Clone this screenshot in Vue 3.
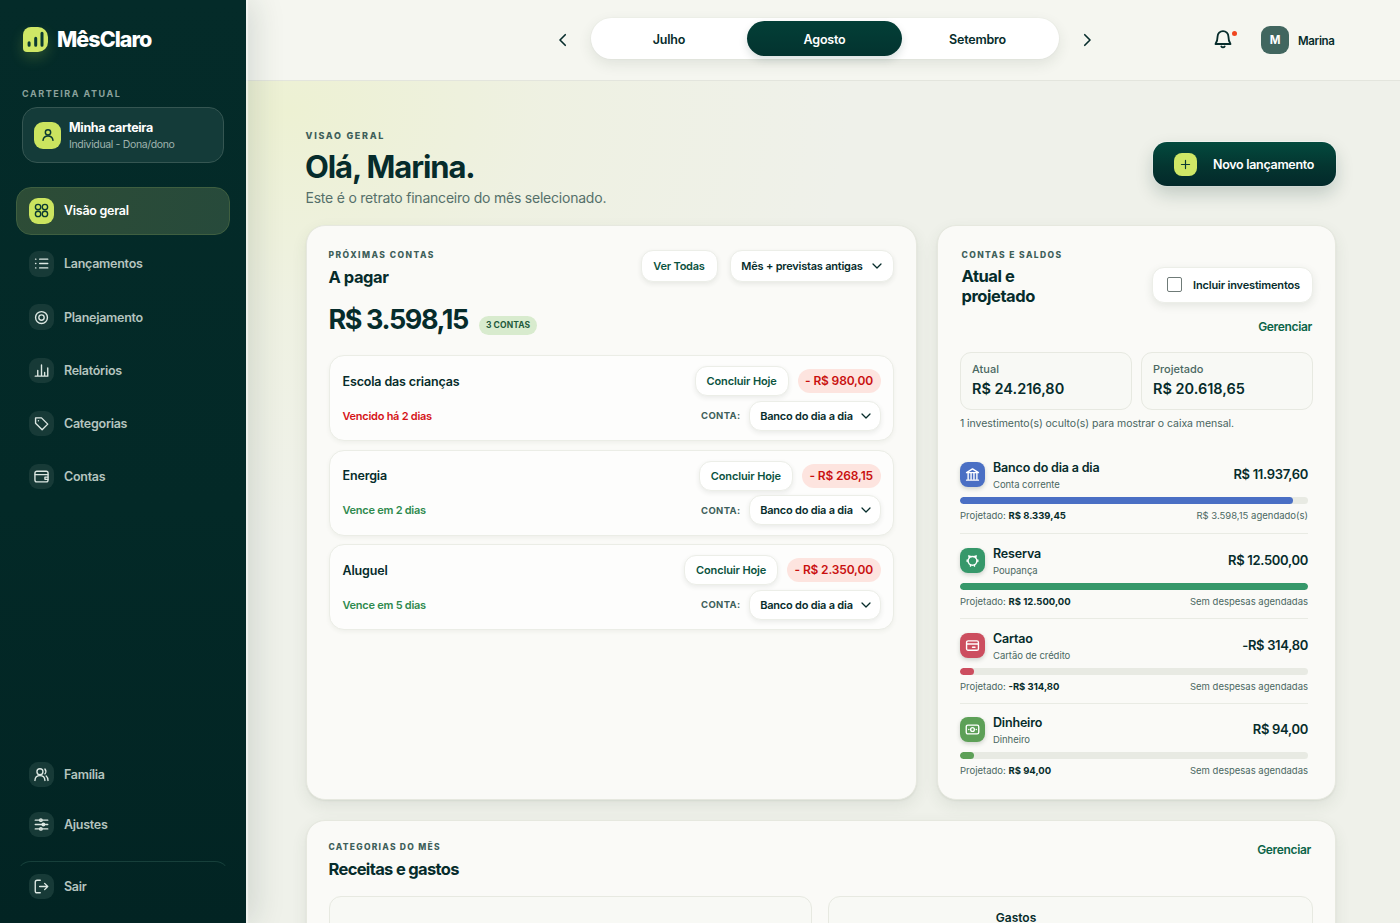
<template>
    <div class="layout">
        <aside class="sidebar">
            <div class="brand">
                <span class="brand-mark">
                    <svg viewBox="0 0 25 25" width="25" height="25" stroke="#0b3a32" stroke-width="3" stroke-linecap="round">
                        <path d="M6.1 15.800v2.400M12.700 11.300v6.900M19 6.300v11.900" />
                    </svg>
                </span>
                <span class="brand-name">MêsClaro</span>
            </div>

            <div class="side-label">CARTEIRA ATUAL</div>
            <div class="wallet">
                <span class="wallet-icon"><svg class="icon" viewBox="0 0 24 24" width="16" height="16" v-html="icons.user"></svg></span>
                <div class="wallet-text">
                    <div class="wallet-name">Minha carteira</div>
                    <div class="wallet-role">Individual - Dona/dono</div>
                </div>
            </div>

            <nav class="nav">
                <a v-for="item in mainNav" :key="item.label" class="nav-item" :class="{ active: item.active }">
                    <span class="nav-icon"><svg class="icon" viewBox="0 0 24 24" width="15" height="15" v-html="icons[item.icon]"></svg></span>
                    {{ item.label }}
                </a>
            </nav>

            <nav class="nav nav-bottom">
                <a v-for="item in bottomNav" :key="item.label" class="nav-item" :class="{ exit: item.exit }">
                    <span class="nav-icon"><svg class="icon" viewBox="0 0 24 24" width="15" height="15" v-html="icons[item.icon]"></svg></span>
                    {{ item.label }}
                </a>
            </nav>
        </aside>

        <main class="main">
            <header class="topbar">
                <div class="months">
                    <button class="arrow" @click="prevMonth">
                        <svg class="icon" viewBox="0 0 24 24" width="18" height="18"><path d="M15 5l-7 7 7 7" /></svg>
                    </button>
                    <div class="month-switch">
                        <span v-for="(month, i) in months" :key="month" class="month" :class="{ selected: i === selectedMonth }" @click="selectedMonth = i">{{ month }}</span>
                    </div>
                    <button class="arrow" @click="nextMonth">
                        <svg class="icon" viewBox="0 0 24 24" width="18" height="18"><path d="M9 5l7 7-7 7" /></svg>
                    </button>
                </div>
                <div class="profile">
                    <span class="bell">
                        <svg class="icon" viewBox="0 0 24 24" width="20" height="20"><path d="M5.500 9a6.500 6.500 0 0 1 13 0c0 5 1 6.800 2.500 9H3c1.500-2.200 2.500-4 2.500-9z" /><path d="M10 21a2.400 2.400 0 0 0 4 0" /></svg>
                    </span>
                    <span class="avatar">M</span>
                    <span class="profile-name">Marina</span>
                </div>
            </header>

            <section class="content">
                <div class="page-head">
                    <div>
                        <div class="eyebrow eyebrow-page">VISAO GERAL</div>
                        <h1>Olá, Marina.</h1>
                        <p>Este é o retrato financeiro do mês selecionado.</p>
                    </div>
                    <button class="new-entry">
                        <span class="plus"><svg class="icon" viewBox="0 0 24 24" width="13" height="13"><path d="M12 4.500v15M4.500 12h15" /></svg></span>
                        <span>Novo lançamento</span>
                    </button>
                </div>

                <div class="panels">
                    <div class="card bills">
                        <div class="bills-head">
                            <div>
                                <div class="eyebrow">PRÓXIMAS CONTAS</div>
                                <h2>A pagar</h2>
                            </div>
                            <div class="bills-filters">
                                <button class="btn see-all">Ver Todas</button>
                                <button class="btn period">Mês + previstas antigas <svg class="icon chevron" viewBox="0 0 24 24" width="12" height="12" v-html="icons.chevron"></svg></button>
                            </div>
                        </div>
                        <div class="total">
                            <strong>R$ 3.598,15</strong>
                            <span class="count">3 CONTAS</span>
                        </div>
                        <div class="bill-list">
                            <div v-for="bill in bills" :key="bill.name" class="bill">
                                <div class="bill-row">
                                    <span class="bill-name">{{ bill.name }}</span>
                                    <button class="btn conclude">Concluir Hoje</button>
                                    <span class="bill-value">- R$ {{ bill.value }}</span>
                                </div>
                                <div class="bill-row second">
                                    <span class="bill-due" :class="{ late: bill.late }">{{ bill.due }}</span>
                                    <span class="bill-account">CONTA:</span>
                                    <button class="btn account-select">Banco do dia a dia <svg class="icon chevron" viewBox="0 0 24 24" width="12" height="12" v-html="icons.chevron"></svg></button>
                                </div>
                            </div>
                        </div>
                    </div>

                    <div class="card balances">
                        <div class="balances-head">
                            <div>
                                <div class="eyebrow">CONTAS E SALDOS</div>
                                <h2>Atual e<br>projetado</h2>
                            </div>
                            <div class="balances-actions">
                                <label class="btn include"><span class="checkbox"></span>Incluir investimentos</label>
                                <a class="link">Gerenciar</a>
                            </div>
                        </div>
                        <div class="stats">
                            <div class="stat"><span>Atual</span><strong>R$ 24.216,80</strong></div>
                            <div class="stat"><span>Projetado</span><strong>R$ 20.618,65</strong></div>
                        </div>
                        <div class="note">1 investimento(s) oculto(s) para mostrar o caixa mensal.</div>
                        <div class="accounts">
                            <div v-for="account in accounts" :key="account.name" class="account">
                                <div class="account-top">
                                    <span class="account-icon" :class="account.color"><svg class="icon" viewBox="0 0 24 24" width="15" height="15" v-html="icons[account.icon]"></svg></span>
                                    <div class="account-text">
                                        <div class="account-name">{{ account.name }}</div>
                                        <div class="account-type">{{ account.type }}</div>
                                    </div>
                                    <strong class="account-value">{{ account.value }}</strong>
                                </div>
                                <div class="bar"><div class="fill" :class="account.color" :style="{ width: account.percent + '%' }"></div></div>
                                <div class="account-foot">
                                    <span>Projetado: <b>{{ account.projected }}</b></span>
                                    <span>{{ account.scheduled }}</span>
                                </div>
                            </div>
                        </div>
                    </div>
                </div>

                <div class="card categories">
                    <div class="categories-head">
                        <div>
                            <div class="eyebrow">CATEGORIAS DO MÊS</div>
                            <h2>Receitas e gastos</h2>
                        </div>
                        <a class="link">Gerenciar</a>
                    </div>
                    <div class="charts">
                        <div class="chart"></div>
                        <div class="chart">Gastos</div>
                    </div>
                </div>
            </section>
        </main>
    </div>
</template>

<script setup>
    import { ref } from 'vue';

    const icons = {
        user: '<circle cx="12" cy="8" r="4"/><path d="M4.500 20c.6-4.200 3.400-6.500 7.500-6.500s6.900 2.300 7.500 6.500"/>',
        grid: '<circle cx="6.500" cy="6.500" r="4.300"/><circle cx="17.500" cy="6.500" r="4.300"/><circle cx="6.500" cy="17.500" r="4.300"/><circle cx="17.500" cy="17.500" r="4.300"/>',
        list: '<path d="M9 5h13M9 12h13M9 19h13M2.500 5h.5M2.500 12h.5M2.500 19h.5"/>',
        target: '<circle cx="12" cy="12" r="9.500"/><circle cx="12" cy="12" r="4.300"/>',
        chart: '<path d="M2 21h20V8M6 21v-9M12 21V3M17 21v-6"/>',
        tag: '<path d="M2.500 3h9.500l10 10-9 9L2.500 11.500z"/><path d="M7 7.500h.1"/>',
        wallet: '<rect x="1.500" y="3.500" width="21" height="17" rx="3"/><path d="M2 9h20M22 13h-4.500v3.500H22"/>',
        users: '<circle cx="9.500" cy="7.500" r="4.800"/><path d="M1.500 21.500c.3-5 3.200-7.700 8-7.700s7.700 2.700 8 7.700M17.500 3.200c1.800 2.300 1.800 5.500 0 7.800M19.500 14.500c1.700 1.500 2.700 3.800 2.900 7"/>',
        sliders: '<path d="M2 5h20M2 12h20M2 19h20"/><circle cx="11" cy="5" r="2"/><circle cx="15" cy="12" r="2"/><circle cx="11" cy="19" r="2"/>',
        exit: '<path d="M10 2H5a3 3 0 0 0-3 3v14a3 3 0 0 0 3 3h5M9 12h13M17 7l5 5-5 5"/>',
        chevron: '<path d="M4 8l8 8 8-8"/>',
        bank: '<path d="M2.500 9L12 3l9.500 6zM5 10v9M9.700 10v9M14.300 10v9M19 10v9M2.500 21h19"/>',
        piggy: '<circle cx="12" cy="12.500" r="7"/><path d="M7 7.500L6 4.500l4 1.200M17 7.500l1-3-4 1.200M8.800 19v2M15.200 19v2M20.500 13.500V11M3.500 13.500V11"/>',
        card: '<rect x="2.500" y="4.500" width="19" height="15" rx="2.500"/><path d="M3 9.500h18M12 14.800h4"/>',
        cash: '<rect x="2" y="5" width="20" height="14" rx="2.500"/><circle cx="12" cy="12" r="3"/><path d="M6 12h.1M18 12h.1"/>'
    };

    const mainNav = [
        { label: 'Visão geral', icon: 'grid', active: true },
        { label: 'Lançamentos', icon: 'list' },
        { label: 'Planejamento', icon: 'target' },
        { label: 'Relatórios', icon: 'chart' },
        { label: 'Categorias', icon: 'tag' },
        { label: 'Contas', icon: 'wallet' }
    ];

    const bottomNav = [
        { label: 'Família', icon: 'users' },
        { label: 'Ajustes', icon: 'sliders' },
        { label: 'Sair', icon: 'exit', exit: true }
    ];

    const months = ['Julho', 'Agosto', 'Setembro'];
    const selectedMonth = ref(1);

    const bills = ref([
        { name: 'Escola das crianças', value: '980,00', due: 'Vencido há 2 dias', late: true },
        { name: 'Energia', value: '268,15', due: 'Vence em 2 dias' },
        { name: 'Aluguel', value: '2.350,00', due: 'Vence em 5 dias' }
    ]);

    const accounts = ref([
        { name: 'Banco do dia a dia', type: 'Conta corrente', value: 'R$ 11.937,60', projected: 'R$ 8.339,45', scheduled: 'R$ 3.598,15 agendado(s)', percent: 95.7, icon: 'bank', color: 'blue' },
        { name: 'Reserva', type: 'Poupança', value: 'R$ 12.500,00', projected: 'R$ 12.500,00', scheduled: 'Sem despesas agendadas', percent: 100, icon: 'piggy', color: 'green' },
        { name: 'Cartao', type: 'Cartão de crédito', value: '-R$ 314,80', projected: '-R$ 314,80', scheduled: 'Sem despesas agendadas', percent: 4, icon: 'card', color: 'red' },
        { name: 'Dinheiro', type: 'Dinheiro', value: 'R$ 94,00', projected: 'R$ 94,00', scheduled: 'Sem despesas agendadas', percent: 4, icon: 'cash', color: 'lime' }
    ]);

    function prevMonth() {
        selectedMonth.value = Math.max(0, selectedMonth.value - 1);
    }

    function nextMonth() {
        selectedMonth.value = Math.min(months.length - 1, selectedMonth.value + 1);
    }
</script>

<style>
    html, body {
        margin: 0;
        overflow: hidden;
    }
</style>

<style scoped>
    * {
        box-sizing: border-box;
    }

    .layout {
        display: flex;
        width: 1400px;
        height: 923px;
        overflow: hidden;
        font-family: Inter, "Liberation Sans", sans-serif;
        color: #062c2b;
        background: radial-gradient(ellipse 560px 430px at 290px 110px, #edf1d3 0%, rgba(238, 241, 219, 0.55) 45%, rgba(239, 241, 233, 0) 100%), #eff1ea;
    }

    .icon {
        display: block;
        flex: none;
        fill: none;
        stroke: currentColor;
        stroke-width: 2.2;
        stroke-linecap: round;
        stroke-linejoin: round;
    }

    .chevron {
        stroke-width: 2.5;
    }

    button {
        font-family: inherit;
        border: 0;
        padding: 0;
        background: none;
        color: inherit;
    }

    h1, h2, p {
        margin: 0;
    }

    /* sidebar */
    .sidebar {
        position: relative;
        z-index: 2;
        display: flex;
        flex-direction: column;
        flex: none;
        width: 246px;
        padding: 27px 16px 11px;
        background: linear-gradient(180deg, #042b29 0%, #032927 55%, #022423 100%);
        box-shadow: 2px 0 1px rgba(255, 255, 255, 0.5), 8px 0 30px rgba(20, 50, 40, 0.14);
    }

    .brand {
        display: flex;
        align-items: center;
        gap: 9px;
        height: 25px;
        padding-left: 7px;
    }

    .brand-mark {
        width: 25px;
        height: 25px;
        border-radius: 8px 10px 10px 4px;
        background: #cfe766;
        box-shadow: 0 6px 14px rgba(200, 230, 80, 0.2);
    }

    .brand-name {
        margin-top: -1px;
        font-size: 21.5px;
        font-weight: 800;
        letter-spacing: -0.95px;
        color: #fff;
    }

    .side-label {
        margin: 35px 0 0 6px;
        height: 13px;
        font-size: 9px;
        line-height: 13px;
        font-weight: 700;
        letter-spacing: 1.53px;
        color: #8ba29c;
    }

    .wallet {
        display: flex;
        align-items: center;
        gap: 8px;
        height: 56px;
        margin: 7px 6px 0;
        padding-left: 11px;
        border: 1px solid #355652;
        border-radius: 15px;
        background: #143b39;
    }

    .wallet-icon {
        display: grid;
        place-items: center;
        width: 27px;
        height: 27px;
        border-radius: 9px;
        background: #cbe45f;
        color: #0b3a32;
    }

    .wallet-text {
        padding-top: 2px;
    }

    .wallet-name {
        font-size: 12.5px;
        line-height: 17px;
        font-weight: 700;
        letter-spacing: -0.32px;
        color: #fff;
    }

    .wallet-role {
        font-size: 10.5px;
        line-height: 17px;
        letter-spacing: -0.35px;
        color: #9fb3ae;
    }

    .nav {
        display: flex;
        flex-direction: column;
        gap: 5.7px;
        margin-top: 24px;
    }

    .nav-item {
        display: flex;
        align-items: center;
        gap: 10px;
        height: 47.5px;
        padding-left: 11.5px;
        border: 1px solid transparent;
        border-radius: 15px;
        font-size: 12.5px;
        font-weight: 600;
        letter-spacing: -0.27px;
        color: #b5c4bf;
    }

    .nav-icon {
        display: grid;
        place-items: center;
        width: 25.5px;
        height: 25.5px;
        border-radius: 9px;
        background: #173a37;
        color: #dde8e3;
    }

    .nav-item.active {
        border-color: #3f5f40;
        background: linear-gradient(100deg, #2d4c36, #274a3b);
        color: #fff;
    }

    .nav-item.active .nav-icon {
        background: #cbe45f;
        color: #0b3a32;
    }

    .nav-bottom {
        gap: 2.5px;
        margin-top: auto;
    }

    .nav-item.exit {
        height: 51px;
        margin-top: 10.2px;
        border-top-color: #17403b;
    }

    /* top bar */
    .main {
        flex: 1;
        min-width: 0;
    }

    .topbar {
        display: flex;
        align-items: center;
        justify-content: space-between;
        height: 80.5px;
        padding: 0 65.5px 2px 308px;
        border-bottom: 1px solid #e3e5dd;
        background: #f5f6f0;
    }

    .months {
        display: flex;
        align-items: center;
        gap: 19px;
    }

    .arrow {
        width: 18px;
        height: 18px;
        margin-top: 2px;
    }

    .month-switch {
        display: grid;
        grid-template-columns: 156px 155px 151px;
        align-items: center;
        width: 468px;
        height: 41px;
        border-radius: 21px;
        background: #fff;
        box-shadow: 0 5px 14px rgba(40, 60, 40, 0.1), 0 0 0 1px rgba(40, 60, 40, 0.02);
    }

    .month {
        height: 35px;
        line-height: 37px;
        border-radius: 18px;
        text-align: center;
        font-size: 12.5px;
        font-weight: 600;
        letter-spacing: -0.22px;
    }

    .month.selected {
        background: linear-gradient(180deg, #033f37, #03332f);
        color: #fff;
        box-shadow: 0 4px 8px rgba(10, 50, 40, 0.15);
    }

    .profile {
        display: flex;
        align-items: center;
    }

    .bell {
        position: relative;
        margin-right: 28px;
    }

    .bell::after {
        content: "";
        position: absolute;
        top: 2px;
        left: 19px;
        width: 5px;
        height: 5px;
        border-radius: 50%;
        background: #f0461f;
    }

    .avatar {
        width: 28px;
        height: 28px;
        margin: 3px 9px 0 0;
        border-radius: 9px;
        background: #41665f;
        color: #fff;
        text-align: center;
        font-size: 11.5px;
        line-height: 29px;
        font-weight: 700;
    }

    .profile-name {
        margin-top: 4px;
        font-size: 11.5px;
        font-weight: 600;
        letter-spacing: -0.35px;
    }

    /* page */
    .content {
        padding: 0 64px 0 59.5px;
    }

    .page-head {
        display: flex;
        justify-content: space-between;
        height: 144.5px;
    }

    .eyebrow {
        font-size: 8.5px;
        line-height: 12px;
        font-weight: 800;
        letter-spacing: 1.25px;
        color: #3e5f5a;
    }

    .eyebrow-page {
        margin-top: 49px;
        font-size: 9px;
        letter-spacing: 1.7px;
    }

    h1 {
        margin-top: 5px;
        margin-left: -0.5px;
        font-size: 31px;
        line-height: 40px;
        font-weight: 700;
        letter-spacing: -1.1px;
    }

    .page-head p {
        font-size: 14px;
        line-height: 22px;
        letter-spacing: -0.22px;
        color: #55706a;
    }

    .new-entry {
        display: flex;
        align-items: center;
        gap: 16px;
        width: 183px;
        height: 44px;
        margin-top: 61.5px;
        padding-left: 21px;
        border-radius: 14px;
        background: linear-gradient(180deg, #034a3e 0%, #043530 55%, #03292a 100%);
        box-shadow: 0 8px 18px rgba(10, 50, 40, 0.2), 0 0 0 1px rgba(255, 255, 255, 0.5);
        color: #fff;
        font-size: 12.5px;
        font-weight: 600;
        letter-spacing: -0.3px;
    }

    .plus {
        display: grid;
        place-items: center;
        width: 23px;
        height: 23px;
        border-radius: 8px;
        background: #cfe766;
        color: #0b3a32;
    }

    .panels {
        display: grid;
        grid-template-columns: 611px 399px;
        justify-content: space-between;
        height: 574.5px;
    }

    .card {
        border: 1px solid #e6e8df;
        border-radius: 19px;
        background: #fafaf7;
        box-shadow: 0 6px 16px rgba(60, 80, 50, 0.09), 0 1px 2px rgba(60, 80, 50, 0.08);
    }

    h2 {
        margin-top: 5.5px;
        font-size: 16.5px;
        line-height: 20px;
        font-weight: 650;
        letter-spacing: -0.66px;
    }

    .btn {
        display: flex;
        align-items: center;
        justify-content: center;
        border: 1px solid #eceee8;
        border-radius: 12px;
        background: #fff;
        box-shadow: 0 2px 5px rgba(40, 60, 40, 0.09);
        font-size: 11px;
        font-weight: 600;
        letter-spacing: -0.22px;
        white-space: nowrap;
    }

    /* bills */
    .bills {
        padding: 23px 22px 0;
    }

    .bills .eyebrow {
        letter-spacing: 1.47px;
    }

    .bills h2 {
        letter-spacing: -0.45px;
    }

    .bills-head {
        display: flex;
        justify-content: space-between;
    }

    .bills-filters {
        display: flex;
        gap: 12px;
        padding-top: 1px;
    }

    .see-all, .period {
        height: 32px;
    }

    .see-all {
        width: 77px;
        color: #0b5340;
    }

    .period {
        gap: 8px;
        width: 164px;
        padding-left: 1px;
    }

    .total {
        display: flex;
        align-items: center;
        gap: 11px;
        height: 34px;
        margin-top: 16px;
    }

    .total strong {
        font-size: 27px;
        font-weight: 700;
        letter-spacing: -1.4px;
    }

    .count {
        height: 19px;
        margin-top: 12px;
        padding: 0 7px;
        border-radius: 10px;
        background: #d8ebce;
        color: #1f5a3c;
        font-size: 8.5px;
        line-height: 19px;
        font-weight: 700;
        letter-spacing: 0.1px;
    }

    .bill-list {
        display: flex;
        flex-direction: column;
        gap: 8.5px;
        margin-top: 18.5px;
    }

    .bill {
        height: 86px;
        padding: 10.5px 12px 0 13px;
        border: 1px solid #ebede6;
        border-radius: 15px;
        background: #fdfdfc;
        box-shadow: 0 2px 4px rgba(60, 80, 50, 0.06);
    }

    .bill-row {
        display: flex;
        align-items: center;
        height: 29px;
    }

    .bill-row.second {
        margin-top: 5.5px;
    }

    .bill-name {
        flex: 1;
        font-size: 12.5px;
        font-weight: 600;
        letter-spacing: -0.15px;
    }

    .conclude {
        width: 94px;
        height: 30px;
        margin-right: 9px;
        color: #0b5340;
        letter-spacing: -0.13px;
    }

    .bill-value {
        height: 24px;
        padding: 0 7.5px;
        border-radius: 12px;
        background: #fde4df;
        color: #c9100f;
        font-size: 12px;
        line-height: 24px;
        font-weight: 600;
        letter-spacing: -0.15px;
    }

    .bill-due {
        flex: 1;
        font-size: 11px;
        font-weight: 600;
        letter-spacing: -0.26px;
        color: #2f8a4e;
    }

    .bill-due.late {
        color: #d51418;
    }

    .bill-account {
        margin-right: 8px;
        font-size: 9.5px;
        font-weight: 700;
        letter-spacing: 0.35px;
        color: #3e5f5a;
    }

    .account-select {
        gap: 7px;
        width: 132px;
        height: 30px;
        padding-left: 3px;
    }

    /* balances */
    .balances {
        padding: 23px 22px 0;
    }

    .balances-head {
        display: flex;
        justify-content: space-between;
        height: 102.5px;
        padding-left: 1.5px;
    }

    .balances-head .eyebrow {
        letter-spacing: 1.37px;
    }

    .balances-head h2 {
        margin-top: 4.5px;
        letter-spacing: -0.45px;
    }

    .balances-actions {
        display: flex;
        flex-direction: column;
        align-items: flex-end;
        padding-top: 17.5px;
    }

    .include {
        gap: 11px;
        width: 161px;
        height: 36px;
        padding-left: 2px;
        box-shadow: 0 3px 8px rgba(40, 60, 40, 0.1);
        letter-spacing: -0.17px;
    }

    .checkbox {
        width: 15px;
        height: 15px;
        border: 1.5px solid #6f7b78;
        border-radius: 2px;
    }

    .link {
        font-size: 12px;
        font-weight: 600;
        line-height: 16px;
        letter-spacing: -0.33px;
        color: #0b6448;
    }

    .balances .link {
        margin: 16px 1px 0 0;
    }

    .stats {
        display: grid;
        grid-template-columns: 1fr 1fr;
        gap: 9px;
    }

    .stat {
        display: flex;
        flex-direction: column;
        height: 58px;
        padding: 8px 11px 0;
        border: 1px solid #e7e9e1;
        border-radius: 11px;
        background: #f8f9f5;
    }

    .stat span {
        font-size: 11px;
        line-height: 16px;
        font-weight: 500;
        color: #4a6862;
    }

    .stat strong {
        margin-top: 1px;
        font-size: 14.5px;
        line-height: 22px;
        font-weight: 600;
    }

    .note {
        margin-top: 6px;
        font-size: 10.5px;
        line-height: 16px;
        letter-spacing: -0.05px;
        color: #48655f;
    }

    .accounts {
        padding-right: 5px;
        margin-top: 16.5px;
    }

    .account {
        height: 85.5px;
        padding-top: 13.5px;
        border-bottom: 1px solid #e9ebe4;
    }

    .account:nth-child(3) {
        height: 84.5px;
    }

    .account:nth-child(4) {
        padding-top: 13px;
        border: 0;
    }

    .account-top {
        display: flex;
        align-items: center;
        height: 26px;
    }

    .account-icon {
        display: grid;
        place-items: center;
        width: 25px;
        height: 25px;
        border-radius: 8px;
        color: #fff;
        box-shadow: 0 2px 4px rgba(40, 60, 40, 0.2);
    }

    .account-text {
        flex: 1;
        margin: 3px 0 0 8px;
    }

    .account-name {
        font-size: 12.5px;
        line-height: 17px;
        font-weight: 600;
        letter-spacing: -0.18px;
    }

    .account-type {
        font-size: 9.5px;
        line-height: 17px;
        letter-spacing: -0.05px;
        color: #4a6862;
    }

    .account-value {
        margin-bottom: 1px;
        font-size: 13px;
        font-weight: 600;
        letter-spacing: -0.31px;
    }

    .bar {
        height: 7px;
        margin-top: 9.5px;
        border-radius: 4px;
        background: #e8eae3;
        overflow: hidden;
    }

    .fill {
        height: 7px;
        border-radius: 4px;
    }

    .blue {
        background: #4a6fc4;
    }

    .green {
        background: #36986a;
    }

    .red {
        background: #cc4e5f;
    }

    .lime {
        background: #5da057;
    }

    .account-foot {
        display: flex;
        justify-content: space-between;
        margin-top: 5px;
        font-size: 9.5px;
        line-height: 14px;
        color: #4a6862;
    }

    .account-foot b {
        font-weight: 650;
        color: #062c2b;
    }

    /* categories */
    .categories {
        height: 260px;
        margin-top: 20.5px;
        padding: 20px 22px 0;
    }

    .categories-head {
        display: flex;
        justify-content: space-between;
        height: 54.5px;
    }

    .categories .link {
        margin: 1px 2px 0 0;
    }

    .charts {
        display: grid;
        grid-template-columns: 483px 485px;
        justify-content: space-between;
    }

    .chart {
        height: 160px;
        padding: 16.5px 109px 0 0;
        border: 1px solid #e7e9e1;
        border-radius: 12px;
        background: #f8f9f5;
        text-align: center;
        font-size: 12px;
        line-height: 10px;
        font-weight: 600;
    }
</style>
